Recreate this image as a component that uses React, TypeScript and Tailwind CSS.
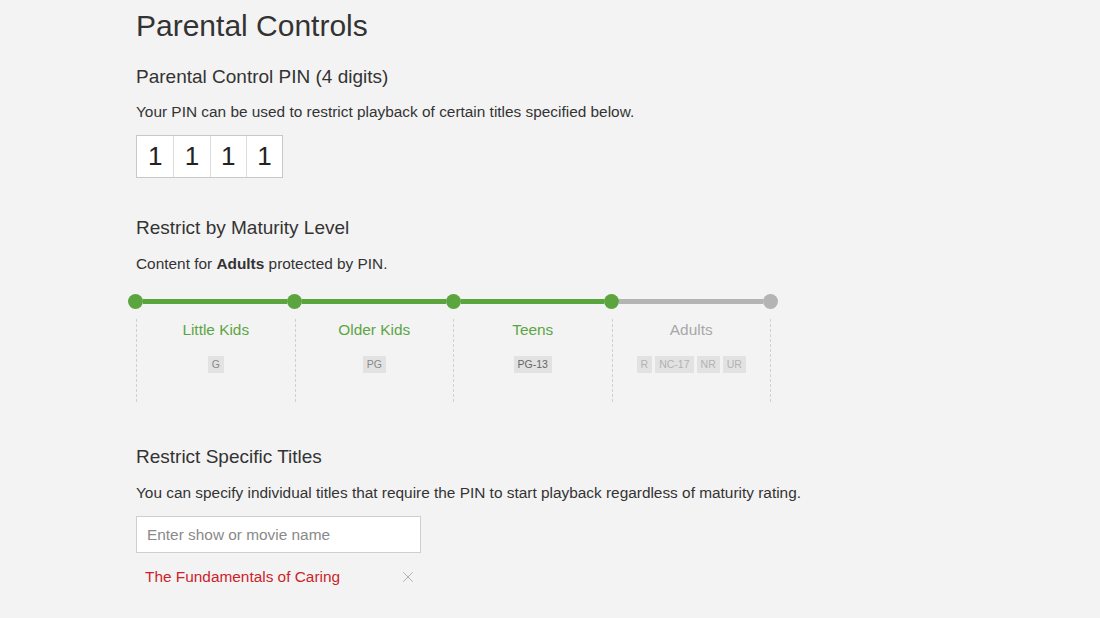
import { X } from 'lucide-react';

const levels = [
  { name: 'Little Kids', ratings: ['G'], on: true },
  { name: 'Older Kids', ratings: ['PG'], on: true },
  { name: 'Teens', ratings: ['PG-13'], on: true },
  { name: 'Adults', ratings: ['R', 'NC-17', 'NR', 'UR'], on: false },
];

export default function App() {
  return (
    <main
      className="min-h-[618px] w-[1100px] bg-[#f3f3f3] text-[#333] pl-[136px]"
      style={{ fontFamily: '"Liberation Sans", Arial, sans-serif' }}
    >
      <div className="flex flex-col pt-[8px]">
        <h1 className="text-[30px] leading-[36px] text-[#333]">Parental Controls</h1>

        {/* PIN */}
        <h2 className="mt-[21px] text-[19px] leading-[24px] text-[#333]">Parental Control PIN (4 digits)</h2>
        <p className="mt-[13px] text-[15.4px] leading-[20px] text-[#333]">
          Your PIN can be used to restrict playback of certain titles specified below.
        </p>
        <div className="mt-[13px] flex w-max border border-[#c8c8c8] bg-white">
          {['1', '1', '1', '1'].map((d, i) => (
            <div
              key={i}
              className={`flex h-[41px] w-[36.25px] items-center justify-center text-[26px] text-[#222] ${i > 0 ? 'border-l border-[#dcdcdc]' : ''}`}
            >
              {d}
            </div>
          ))}
        </div>

        {/* Maturity */}
        <h2 className="mt-[38px] text-[19px] leading-[24px] text-[#333]">Restrict by Maturity Level</h2>
        <p className="mt-[14px] text-[15.4px] leading-[20px] text-[#333]">
          Content for <b className="font-bold">Adults</b> protected by PIN.
        </p>

        <div className="mt-[20px] -ml-[8px] flex w-[650px] items-center">
          {[0, 1, 2, 3, 4].map((i) => (
            <div key={i} className={`flex items-center ${i < 4 ? 'flex-1' : ''}`}>
              <span className={`h-[15px] w-[15px] shrink-0 rounded-full ${i < 4 ? 'bg-[#5ba53f]' : 'bg-[#b4b4b4]'}`} />
              {i < 4 && <span className={`h-[5px] flex-1 ${i < 3 ? 'bg-[#5ba53f]' : 'bg-[#b4b4b4]'}`} />}
            </div>
          ))}
        </div>

        <div className="mt-[10px] grid w-[635px] grid-cols-4 border-r border-dashed border-[#d0d0d0]">
          {levels.map((l) => (
            <div key={l.name} className="flex h-[83px] flex-col items-center border-l border-dashed border-[#d0d0d0]">
              <span className={`mt-[1px] text-[15.4px] leading-[20px] ${l.on ? 'text-[#5ca545]' : 'text-[#a8a8a8]'}`}>
                {l.name}
              </span>
              <div className="mt-[16px] flex gap-[3px]">
                {l.ratings.map((r) => (
                  <span
                    key={r}
                    className={`flex h-[17px] items-center bg-[#e2e2e2] px-[4px] text-[10.5px] ${
                      l.on ? (r === 'PG-13' ? 'text-[#666]' : 'text-[#888]') : 'text-[#b2b2b2]'
                    }`}
                  >
                    {r}
                  </span>
                ))}
              </div>
            </div>
          ))}
        </div>

        {/* Specific titles */}
        <h2 className="mt-[43px] text-[19px] leading-[24px] text-[#333]">Restrict Specific Titles</h2>
        <p className="mt-[14px] text-[15.4px] leading-[20px] text-[#333]">
          You can specify individual titles that require the PIN to start playback regardless of maturity rating.
        </p>
        <input
          className="mt-[13px] h-[37px] w-[285px] border border-[#cfcfcf] bg-white px-[10px] text-[15.4px] text-[#333] outline-none placeholder:text-[#8a8a8a]"
          placeholder="Enter show or movie name"
        />
        <div className="mt-[14px] flex w-[285px] items-center justify-between pl-[9px] pr-[4px]">
          <span className="text-[15.4px] leading-[20px] text-[#cc1f2b]">The Fundamentals of Caring</span>
          <X className="h-[18px] w-[18px] text-[#aaa]" strokeWidth={1.2} />
        </div>
      </div>
    </main>
  );
}
